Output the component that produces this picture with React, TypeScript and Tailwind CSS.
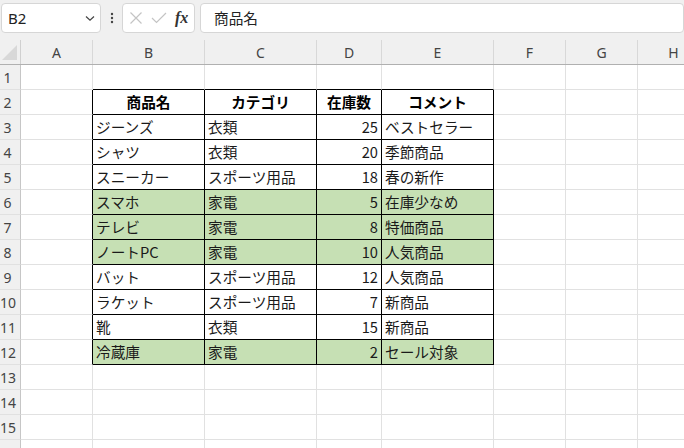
import type { ReactNode } from 'react';

type Row = {
  name: string;
  category: string;
  stock: number;
  comment: string;
  highlight?: boolean;
};

const rows: Row[] = [
  { name: 'ジーンズ', category: '衣類', stock: 25, comment: 'ベストセラー' },
  { name: 'シャツ', category: '衣類', stock: 20, comment: '季節商品' },
  { name: 'スニーカー', category: 'スポーツ用品', stock: 18, comment: '春の新作' },
  { name: 'スマホ', category: '家電', stock: 5, comment: '在庫少なめ', highlight: true },
  { name: 'テレビ', category: '家電', stock: 8, comment: '特価商品', highlight: true },
  { name: 'ノートPC', category: '家電', stock: 10, comment: '人気商品', highlight: true },
  { name: 'バット', category: 'スポーツ用品', stock: 12, comment: '人気商品' },
  { name: 'ラケット', category: 'スポーツ用品', stock: 7, comment: '新商品' },
  { name: '靴', category: '衣類', stock: 15, comment: '新商品' },
  { name: '冷蔵庫', category: '家電', stock: 2, comment: 'セール対象', highlight: true },
];

const letters = ['A', 'B', 'C', 'D', 'E', 'F', 'G', 'H'];
const widths = ['w-[72px]', 'w-[112px]', 'w-[112px]', 'w-[65px]', 'w-[112px]', 'w-[72px]', 'w-[72px]', 'w-[72px]'];

const font = "font-['Noto_Sans_CJK_JP',sans-serif]";

const RowHeader = ({ n }: { n: number }) => (
  <div className="flex h-full w-[21px] shrink-0 items-center border-r border-b border-r-[#c6c6c6] border-b-[#e1e1e1] bg-[#f0f0f0]">
    <span className="w-[15px] text-center font-['Noto_Sans',sans-serif] text-[14px] text-[#444]">{n}</span>
  </div>
);

const Blank = ({ w, bottom, right }: { w: string; bottom?: boolean; right?: boolean }) => (
  <div
    className={`${w} h-full shrink-0 border-r border-b ${right ? 'border-r-black' : 'border-r-[#e1e1e1]'} ${
      bottom ? 'border-b-black' : 'border-b-[#e1e1e1]'
    }`}
  />
);

const Cell = ({
  w,
  children,
  align = 'left',
  bold,
  fill,
}: {
  w: string;
  children: ReactNode;
  align?: 'left' | 'right' | 'center';
  bold?: boolean;
  fill?: boolean;
}) => (
  <div
    className={`${w} flex h-full shrink-0 items-center border-r border-b border-black px-[3px] text-[14.67px] leading-[24px] text-[#1a1a1a] ${
      fill ? 'bg-[#c6e0b4]' : ''
    } ${align === 'right' ? 'justify-end' : align === 'center' ? 'justify-center' : 'justify-start'} ${
      bold ? 'font-bold text-black' : ''
    }`}
  >
    <span className="whitespace-nowrap">{children}</span>
  </div>
);

const Toolbar = () => (
  <div className="flex h-[36px] items-start pt-[3px] pl-[1px]">
    <div className="flex h-[30px] w-[100px] items-center justify-between rounded-[4px] border border-[#d6d6d6] bg-white pr-[4px] pl-[6px]">
      <span className="font-['Noto_Sans',sans-serif] text-[15px] text-[#222]">B2</span>
      <svg width="12" height="8" viewBox="0 0 12 8" fill="none" stroke="#444" strokeWidth="1.2">
        <path d="M2 2.5 6 6.2 10 2.5" />
      </svg>
    </div>
    <div className="flex h-[30px] w-[21px] items-center justify-center">
      <svg width="4" height="12" viewBox="0 0 4 12" fill="#444">
        <circle cx="2" cy="2" r="1.2" />
        <circle cx="2" cy="6" r="1.2" />
        <circle cx="2" cy="10" r="1.2" />
      </svg>
    </div>
    <div className="flex h-[30px] w-[73px] items-center gap-[8px] rounded-[4px] border border-[#d6d6d6] bg-white pl-[6px]">
      <svg width="14" height="14" viewBox="0 0 14 14" stroke="#c4c4c4" strokeWidth="1.2">
        <path d="M1.5 1.5 12.5 12.5M12.5 1.5 1.5 12.5" />
      </svg>
      <svg width="16" height="12" viewBox="0 0 16 12" fill="none" stroke="#c4c4c4" strokeWidth="1.2">
        <path d="M1 6 5.5 10.5 15 1" />
      </svg>
      <span className="font-['Liberation_Serif',serif] text-[16px] font-bold text-[#333] italic">fx</span>
    </div>
    <div className="ml-[5px] flex h-[30px] flex-1 items-center rounded-[4px] border border-[#d6d6d6] bg-white pl-[13px]">
      <span className={`${font} text-[14.67px] text-[#222]`}>商品名</span>
    </div>
  </div>
);

const ColumnHeaders = () => (
  <div className="flex h-[29px] items-end border-b border-[#b0b0b0]">
    <div className="flex h-[24px] w-[21px] shrink-0 items-end justify-end border-r border-[#d0d0d0] pr-[3px] pb-[4px]">
      <svg width="15" height="15" viewBox="0 0 15 15">
        <path d="M15 0 15 15 0 15Z" fill="#d8d8d8" />
      </svg>
    </div>
    {letters.map((l, i) => (
      <div
        key={l}
        className={`${widths[i]} flex h-[24px] shrink-0 items-center justify-center border-r border-[#d8d8d8] font-['Noto_Sans',sans-serif] text-[14px] text-[#444]`}
      >
        {l}
      </div>
    ))}
  </div>
);

export default function App() {
  return (
    <div className={`h-[448px] w-[684px] overflow-hidden bg-[#f0f0f0] ${font}`}>
      <Toolbar />
      <ColumnHeaders />
      <div className="bg-white">
        {/* row 1 */}
        <div className="flex h-[25px]">
          <RowHeader n={1} />
          <Blank w={widths[0]} />
          <Blank w={widths[1]} bottom />
          <Blank w={widths[2]} bottom />
          <Blank w={widths[3]} bottom />
          <Blank w={widths[4]} bottom />
          <Blank w={widths[5]} />
          <Blank w={widths[6]} />
          <Blank w={widths[7]} />
        </div>
        {/* row 2: headers */}
        <div className="flex h-[25px]">
          <RowHeader n={2} />
          <Blank w={widths[0]} right />
          <Cell w={widths[1]} align="center" bold>商品名</Cell>
          <Cell w={widths[2]} align="center" bold>カテゴリ</Cell>
          <Cell w={widths[3]} align="center" bold>在庫数</Cell>
          <Cell w={widths[4]} align="center" bold>コメント</Cell>
          <Blank w={widths[5]} />
          <Blank w={widths[6]} />
          <Blank w={widths[7]} />
        </div>
        {rows.map((r, i) => (
          <div key={r.name} className="flex h-[25px]">
            <RowHeader n={i + 3} />
            <Blank w={widths[0]} right />
            <Cell w={widths[1]} fill={r.highlight}>{r.name}</Cell>
            <Cell w={widths[2]} fill={r.highlight}>{r.category}</Cell>
            <Cell w={widths[3]} fill={r.highlight} align="right">{r.stock}</Cell>
            <Cell w={widths[4]} fill={r.highlight}>{r.comment}</Cell>
            <Blank w={widths[5]} />
            <Blank w={widths[6]} />
            <Blank w={widths[7]} />
          </div>
        ))}
        {[13, 14, 15, 16].map((n) => (
          <div key={n} className="flex h-[25px]">
            <RowHeader n={n} />
            {widths.map((w, i) => (
              <Blank key={i} w={w} />
            ))}
          </div>
        ))}
      </div>
    </div>
  );
}
